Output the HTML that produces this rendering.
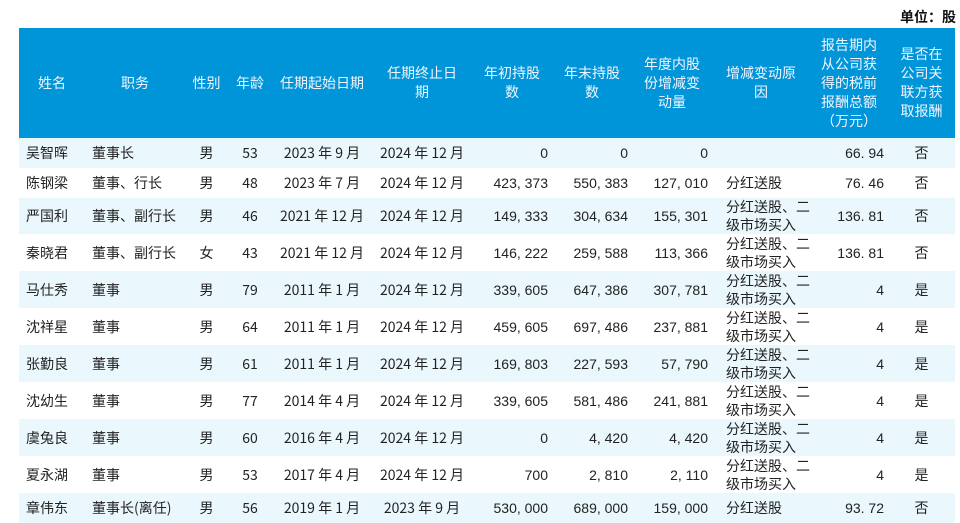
<!DOCTYPE html>
<html><head><meta charset="utf-8"><style>
body{margin:0;width:960px;height:519px;overflow:hidden;background:#fff;font-family:"Liberation Sans","Noto Sans CJK SC",sans-serif;color:#222;font-size:14px}
.unit{position:absolute;right:4px;top:7px;font-size:14px;color:#111;font-family:"Noto Sans CJK SC",sans-serif;font-weight:bold}
table{position:absolute;left:19px;top:28px;border-collapse:collapse;table-layout:fixed;width:936px}
th{background:#0095d9;color:#f0f6ff;font-weight:normal;height:110px;line-height:19px;padding:0 2px;font-size:14px;font-family:"Noto Sans CJK SC",sans-serif}
td{padding:0;line-height:18px;font-family:"Noto Sans CJK SC",sans-serif;white-space:nowrap;overflow:visible}
td.r{font-family:"Liberation Sans",sans-serif}
tr.a td{background:#eaf7fd}
.c{text-align:center}.r{text-align:right;padding-right:4px}.l{padding-left:7px}.l2{padding-left:14px}
</style></head><body>
<div class="unit">单位：股</div>
<table>
<colgroup><col style="width:66px"><col style="width:100px"><col style="width:43px"><col style="width:44px"><col style="width:100px"><col style="width:100px"><col style="width:80px"><col style="width:80px"><col style="width:80px"><col style="width:98px"><col style="width:78px"><col style="width:67px"></colgroup>
<tr><th>姓名</th><th>职务</th><th>性别</th><th>年龄</th><th>任期起始日期</th><th>任期终止日<br>期</th><th>年初持股<br>数</th><th>年末持股<br>数</th><th>年度内股<br>份增减变<br>动量</th><th>增减变动原<br>因</th><th>报告期内<br>从公司获<br>得的税前<br>报酬总额<br>（万元）</th><th>是否在<br>公司关<br>联方获<br>取报酬</th></tr>
<tr class="a" style="height:30px"><td class="l">吴智晖</td><td class="l">董事长</td><td class="c">男</td><td class="c">53</td><td class="c">2023 年 9 月</td><td class="c">2024 年 12 月</td><td class="r">0</td><td class="r">0</td><td class="r">0</td><td class="l2"></td><td class="r">66. 94</td><td class="c">否</td></tr>
<tr style="height:30px"><td class="l">陈钢梁</td><td class="l">董事、行长</td><td class="c">男</td><td class="c">48</td><td class="c">2023 年 7 月</td><td class="c">2024 年 12 月</td><td class="r">423, 373</td><td class="r">550, 383</td><td class="r">127, 010</td><td class="l2">分红送股</td><td class="r">76. 46</td><td class="c">否</td></tr>
<tr class="a" style="height:36px"><td class="l">严国利</td><td class="l">董事、副行长</td><td class="c">男</td><td class="c">46</td><td class="c">2021 年 12 月</td><td class="c">2024 年 12 月</td><td class="r">149, 333</td><td class="r">304, 634</td><td class="r">155, 301</td><td class="l2">分红送股、二<br>级市场买入</td><td class="r">136. 81</td><td class="c">否</td></tr>
<tr style="height:37px"><td class="l">秦晓君</td><td class="l">董事、副行长</td><td class="c">女</td><td class="c">43</td><td class="c">2021 年 12 月</td><td class="c">2024 年 12 月</td><td class="r">146, 222</td><td class="r">259, 588</td><td class="r">113, 366</td><td class="l2">分红送股、二<br>级市场买入</td><td class="r">136. 81</td><td class="c">否</td></tr>
<tr class="a" style="height:37px"><td class="l">马仕秀</td><td class="l">董事</td><td class="c">男</td><td class="c">79</td><td class="c">2011 年 1 月</td><td class="c">2024 年 12 月</td><td class="r">339, 605</td><td class="r">647, 386</td><td class="r">307, 781</td><td class="l2">分红送股、二<br>级市场买入</td><td class="r">4</td><td class="c">是</td></tr>
<tr style="height:37px"><td class="l">沈祥星</td><td class="l">董事</td><td class="c">男</td><td class="c">64</td><td class="c">2011 年 1 月</td><td class="c">2024 年 12 月</td><td class="r">459, 605</td><td class="r">697, 486</td><td class="r">237, 881</td><td class="l2">分红送股、二<br>级市场买入</td><td class="r">4</td><td class="c">是</td></tr>
<tr class="a" style="height:37px"><td class="l">张勤良</td><td class="l">董事</td><td class="c">男</td><td class="c">61</td><td class="c">2011 年 1 月</td><td class="c">2024 年 12 月</td><td class="r">169, 803</td><td class="r">227, 593</td><td class="r">57, 790</td><td class="l2">分红送股、二<br>级市场买入</td><td class="r">4</td><td class="c">是</td></tr>
<tr style="height:37px"><td class="l">沈幼生</td><td class="l">董事</td><td class="c">男</td><td class="c">77</td><td class="c">2014 年 4 月</td><td class="c">2024 年 12 月</td><td class="r">339, 605</td><td class="r">581, 486</td><td class="r">241, 881</td><td class="l2">分红送股、二<br>级市场买入</td><td class="r">4</td><td class="c">是</td></tr>
<tr class="a" style="height:37px"><td class="l">虞兔良</td><td class="l">董事</td><td class="c">男</td><td class="c">60</td><td class="c">2016 年 4 月</td><td class="c">2024 年 12 月</td><td class="r">0</td><td class="r">4, 420</td><td class="r">4, 420</td><td class="l2">分红送股、二<br>级市场买入</td><td class="r">4</td><td class="c">是</td></tr>
<tr style="height:37px"><td class="l">夏永湖</td><td class="l">董事</td><td class="c">男</td><td class="c">53</td><td class="c">2017 年 4 月</td><td class="c">2024 年 12 月</td><td class="r">700</td><td class="r">2, 810</td><td class="r">2, 110</td><td class="l2">分红送股、二<br>级市场买入</td><td class="r">4</td><td class="c">是</td></tr>
<tr class="a" style="height:30px"><td class="l">章伟东</td><td class="l">董事长(离任)</td><td class="c">男</td><td class="c">56</td><td class="c">2019 年 1 月</td><td class="c">2023 年 9 月</td><td class="r">530, 000</td><td class="r">689, 000</td><td class="r">159, 000</td><td class="l2">分红送股</td><td class="r">93. 72</td><td class="c">否</td></tr>
</table>
</body></html>
